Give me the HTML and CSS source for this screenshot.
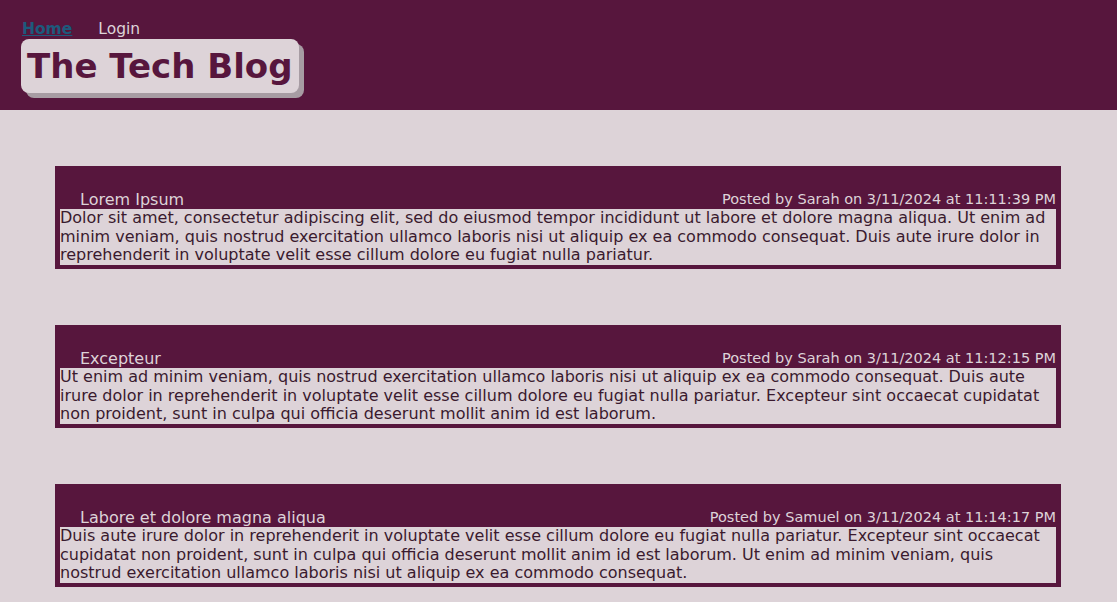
FILE: index.html
```html
<!DOCTYPE html>
<html>
<head>
<meta charset="utf-8">
<title>The Tech Blog</title>
<link rel="stylesheet" href="styles.css">
</head>
<body>
<header class="site-header">
  <nav class="nav">
    <a class="nav-link active" href="#">Home</a>
    <a class="nav-link" href="#">Login</a>
  </nav>
  <h1 class="brand">The Tech Blog</h1>
</header>
<main class="posts">
  <article class="post">
    <div class="post-head">
      <span class="post-title">Lorem Ipsum</span>
      <span class="post-meta">Posted by Sarah on 3/11/2024 at 11:11:39 PM</span>
    </div>
    <p class="post-body">Dolor sit amet, consectetur adipiscing elit, sed do eiusmod tempor incididunt ut labore et dolore magna aliqua. Ut enim ad minim veniam, quis nostrud exercitation ullamco laboris nisi ut aliquip ex ea commodo consequat. Duis aute irure dolor in reprehenderit in voluptate velit esse cillum dolore eu fugiat nulla pariatur.</p>
  </article>
  <article class="post">
    <div class="post-head">
      <span class="post-title">Excepteur</span>
      <span class="post-meta">Posted by Sarah on 3/11/2024 at 11:12:15 PM</span>
    </div>
    <p class="post-body">Ut enim ad minim veniam, quis nostrud exercitation ullamco laboris nisi ut aliquip ex ea commodo consequat. Duis aute irure dolor in reprehenderit in voluptate velit esse cillum dolore eu fugiat nulla pariatur. Excepteur sint occaecat cupidatat non proident, sunt in culpa qui officia deserunt mollit anim id est laborum.</p>
  </article>
  <article class="post">
    <div class="post-head">
      <span class="post-title">Labore et dolore magna aliqua</span>
      <span class="post-meta">Posted by Samuel on 3/11/2024 at 11:14:17 PM</span>
    </div>
    <p class="post-body">Duis aute irure dolor in reprehenderit in voluptate velit esse cillum dolore eu fugiat nulla pariatur. Excepteur sint occaecat cupidatat non proident, sunt in culpa qui officia deserunt mollit anim id est laborum. Ut enim ad minim veniam, quis nostrud exercitation ullamco laboris nisi ut aliquip ex ea commodo consequat.</p>
  </article>
</main>
</body>
</html>
```
FILE: styles.css
```css
html, body {
  margin: 0;
  padding: 0;
}
body {
  background: #ddd3d8;
  font-family: "DejaVu Sans", "Noto Sans", sans-serif;
  color: #3a1a2e;
  font-size: 16px;
}
.site-header {
  background: #57163d;
  height: 110px;
  box-sizing: border-box;
  padding: 20px 0 0 21px;
}
.nav {
  display: flex;
  gap: 26px;
  padding-left: 1px;
  line-height: 19px;
  font-size: 15.5px;
}
.nav-link {
  color: #ddd3d8;
  text-decoration: none;
}
.nav-link.active {
  color: #1d5a7c;
  font-weight: bold;
  text-decoration: underline;
}
.brand {
  display: inline-block;
  margin: 0;
  background: #ddd3d8;
  color: #57163d;
  font-size: 34px;
  line-height: 54px;
  height: 54px;
  padding: 0 6px;
  border-radius: 8px;
  box-shadow: 5px 5px 0 #a79ca3;
  font-weight: bold;
}
.posts {
  display: flex;
  flex-direction: column;
  gap: 56px;
  padding: 56px 56px 0 55px;
}
.post {
  background: #57163d;
  padding: 0 5px 4px 5px;
}
.post-head {
  display: flex;
  justify-content: space-between;
  align-items: flex-end;
  height: 43px;
  box-sizing: border-box;
  padding-left: 20px;
  color: #ddd3d8;
  line-height: 19px;
}
.post-title {
  font-size: 16px;
}
.post-meta {
  font-size: 14.5px;
}
.post-body {
  margin: 0;
  background: #ddd3d8;
  line-height: 18.67px;
  color: #3a1a2e;
}
```
